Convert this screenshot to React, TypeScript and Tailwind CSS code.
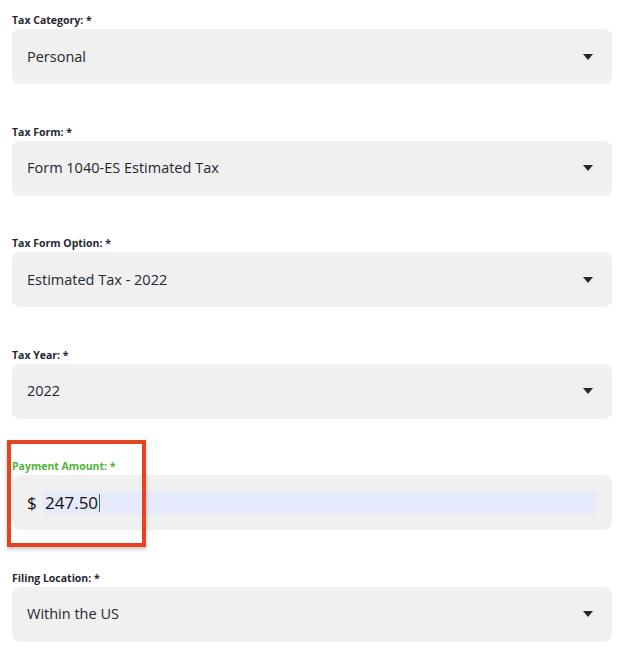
const fields = [
  { label: "Tax Category: *", value: "Personal" },
  { label: "Tax Form: *", value: "Form 1040-ES Estimated Tax" },
  { label: "Tax Form Option: *", value: "Estimated Tax - 2022" },
  { label: "Tax Year: *", value: "2022" },
]

function Caret() {
  return (
    <svg width="10" height="6" viewBox="0 0 10 6" className="shrink-0">
      <path d="M0 0 L10 0 L5 6 Z" fill="#262730" />
    </svg>
  )
}

function SelectField({ label, value }: { label: string; value: string }) {
  return (
    <div className="flex flex-col">
      <label className="h-[18px] pl-[12px] text-[10.5px] font-bold leading-[18px] text-[#262730]">
        {label}
      </label>
      <div className="ml-[12px] mr-[14px] flex h-[55px] items-center justify-between rounded-[8px] bg-[#f0f0f0] pl-[15px] pr-[19px] text-[14.5px] text-[#262730]">
        <span>{value}</span>
        <Caret />
      </div>
    </div>
  )
}

function App() {
  return (
    <div
      className="flex min-h-screen flex-col gap-[38.5px] bg-white pt-[11px]"
      style={{ fontFamily: '"Open Sans", "Noto Sans", sans-serif' }}
    >
      {fields.map((f) => (
        <SelectField key={f.label} {...f} />
      ))}

      <div className="relative flex flex-col">
        <label className="h-[18px] pl-[12px] text-[10.5px] font-bold leading-[18px] text-[#52b335]">
          Payment Amount: *
        </label>
        <div className="ml-[12px] mr-[14px] flex h-[55px] items-center rounded-[8px] bg-[#f0f0f0] pl-[15px] pr-[15px] text-[17px] text-[#111111]">
          <span className="w-[16px]">$</span>
          <div className="flex h-[23px] flex-1 items-center bg-[#e6eafd] pl-[2px]">
            <span>247.50</span>
            <span className="ml-[1px] h-[18px] w-[1px] bg-[#2e7d32]" />
          </div>
        </div>
        <div className="absolute left-[7px] top-[-17px] h-[107px] w-[139px] border-[4px] border-[#e8431f] shadow-[0_2px_4px_rgba(0,0,0,0.25)]" />
      </div>

      <SelectField label="Filing Location: *" value="Within the US" />
    </div>
  )
}

export default App
